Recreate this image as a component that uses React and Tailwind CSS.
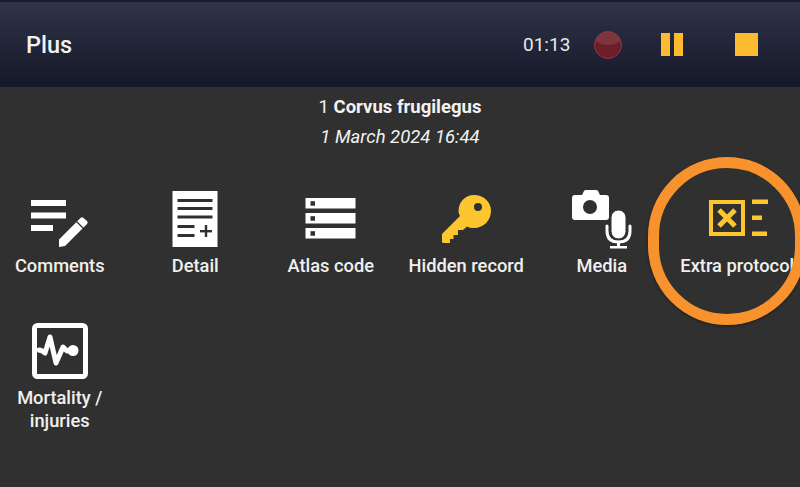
function CommentsIcon() {
  return (
    <svg width="60" height="50" viewBox="0 0 60 50" fill="white">
      <rect x="1" y="0" width="35" height="6" />
      <rect x="1" y="12.5" width="35" height="6" />
      <rect x="1" y="25" width="22" height="6" />
      <path d="M29 39.5 L50.5 18 Q52 16.5 53.5 18 L57 21 Q58.5 22.5 57 24 L35 46 L29 47 Z" />
      <path d="M46.500 21.500 L54 29" stroke="#303030" strokeWidth="1.200" fill="none" />
    </svg>
  );
}

function DetailIcon() {
  return (
    <svg width="46" height="56" viewBox="0 0 46 56">
      <rect x="0.5" y="0" width="45" height="56" fill="white" />
      <g fill="#303030">
        <rect x="5.5" y="8" width="35" height="3" />
        <rect x="5.5" y="16" width="35" height="3" />
        <rect x="5.5" y="24.500" width="35" height="3" />
        <rect x="5.5" y="34" width="17" height="3" />
        <rect x="5.5" y="43" width="17" height="3" />
        <rect x="28" y="39" width="12" height="2.400" />
        <rect x="32.800" y="34" width="2.400" height="12" />
      </g>
    </svg>
  );
}

function AtlasIcon() {
  return (
    <svg width="51" height="41" viewBox="0 0 51 41">
      {[0, 15, 30].map((y) => (
        <g key={y}>
          <rect x="0.5" y={y} width="50" height="10.500" fill="white" />
          <rect x="5.500" y={y + 3.200} width="4.500" height="4.500" fill="#303030" />
        </g>
      ))}
    </svg>
  );
}

function KeyIcon() {
  return (
    <svg width="50" height="49" viewBox="0 0 50 49">
      <path
        fill="#fdc52f"
        fillRule="evenodd"
        d="M32 0 C42 0 49 7 49 16 C49 25 42 33 32 33 C29 33 27 32.500 25 31.500 L21 35 L16 35 L16 40 L11.500 40 L11.500 44 L8 44 L8 48 L1 48 L0 47 L0 39 L18 21 C17 19 16.500 17.500 16.500 16 C16.500 7 23 0 32 0 Z M36 8 A4 4 0 1 0 36 16 A4 4 0 1 0 36 8 Z"
      />
    </svg>
  );
}

function MediaIcon() {
  return (
    <svg width="60" height="60" viewBox="0 0 60 60" fill="white">
      <path
        fillRule="evenodd"
        d="M3 6 H10 L12 2 Q12.500 1 14 1 H24 Q25.500 1 26 2 L28 6 H34 Q37 6 37 9 V28 Q37 31 34 31 H3 Q0 31 0 28 V9 Q0 6 3 6 Z M18 11 A7 7 0 1 0 18 25 A7 7 0 1 0 18 11 Z"
      />
      <rect x="39" y="21" width="15" height="29" rx="7.500" stroke="#303030" strokeWidth="1" />
      <path
        d="M35 37 V42 Q35 53 46.500 53 Q58 53 58 42 V37"
        fill="none"
        stroke="white"
        strokeWidth="3"
        strokeLinecap="round"
      />
      <rect x="45" y="53" width="3" height="5" />
      <rect x="38" y="57" width="17" height="2.500" />
    </svg>
  );
}

function ExtraIcon() {
  return (
    <svg width="60" height="38" viewBox="0 0 60 38" fill="#fdc52f">
      <path fillRule="evenodd" d="M0 1 H36 V37 H0 Z M4 5 V33 H32 V5 Z" />
      <path d="M10 11 L26 27 M26 11 L10 27" stroke="#fdc52f" strokeWidth="5" fill="none" />
      <rect x="43" y="0.500" width="16" height="4.500" />
      <rect x="43" y="16.500" width="10" height="4.500" />
      <rect x="43" y="32.500" width="15" height="4.500" />
    </svg>
  );
}

function MortalityIcon() {
  return (
    <svg width="56" height="56" viewBox="0 0 56 56">
      <rect x="2.500" y="2.500" width="51" height="51" rx="3" fill="none" stroke="white" strokeWidth="5" />
      <path
        d="M5 28 Q8 26 10 28 L13 30 L18 14 L24 40 L31 24 L35 28 L40 28"
        fill="none"
        stroke="white"
        strokeWidth="5"
        strokeLinejoin="round"
      />
      <circle cx="41" cy="27.500" r="5.500" fill="white" />
    </svg>
  );
}

const actions = [
  { label: 'Comments', icon: <CommentsIcon />, shift: 'translate-y-[6px]' },
  { label: 'Detail', icon: <DetailIcon />, shift: '' },
  { label: 'Atlas code', icon: <AtlasIcon />, shift: '-translate-y-px' },
  { label: 'Hidden record', icon: <KeyIcon />, shift: 'translate-x-px' },
  { label: 'Media', icon: <MediaIcon />, shift: '' },
  { label: 'Extra protocol', icon: <ExtraIcon />, shift: 'translate-x-[2px] -translate-y-px' },
  { label: 'Mortality / injuries', icon: <MortalityIcon />, shift: '' },
];

export default function App() {
  return (
    <div className="relative w-[800px] h-[487px] overflow-hidden bg-[#303030] text-white font-['Roboto',sans-serif]">
      <header className="h-[87px] border-t-2 border-[#191b33] bg-gradient-to-b from-[#2f3448] to-[#151828] flex items-center pl-[26px]">
        <h1 className="text-[23.500px] font-medium text-[#f2f2f2] flex-1 pt-[2px]">Plus</h1>
        <span className="text-[19px] text-[#e8e8ea] w-[71px] pt-[2px]">01:13</span>
        <div className="relative w-[28px] h-[28px] rounded-full bg-[#6e1e28] border border-[#8a3a42] overflow-hidden">
          <div className="absolute top-0 inset-x-0 h-[13px] bg-white/10 rounded-b-[50%]" />
        </div>
        <div className="ml-[39px] flex gap-[4px]">
          <div className="w-[9px] h-[23px] bg-[#fdbb30]" />
          <div className="w-[9px] h-[23px] bg-[#fdbb30]" />
        </div>
        <div className="ml-[52px] mr-[42px] w-[23px] h-[23px] bg-[#fdbb30]" />
      </header>

      <section className="mt-[9px] text-center text-[18.500px] text-[#f2f2f2]">
        <p className="leading-[22px]">
          1 <span className="font-bold">Corvus frugilegus</span>
        </p>
        <p className="mt-[8px] leading-[22px] italic">1 March 2024 16:44</p>
      </section>

      <div className="mt-[41px] -ml-2 w-[813px] grid grid-cols-6">
        {actions.map((a) => (
          <div key={a.label} className="flex flex-col items-center h-[132px]">
            <div className={`h-[60px] flex items-center justify-center ${a.shift}`}>{a.icon}</div>
            <span className="mt-[5px] px-2 text-[18.300px] leading-[23px] font-medium text-center text-[#f0f0f0]">
              {a.label}
            </span>
          </div>
        ))}
      </div>

      <div className="absolute left-[648px] top-[157px] w-[158px] h-[168px] rounded-full border-[11px] border-[#f7922c] shadow-[0_1px_3px_rgba(0,0,0,0.4)]" />
    </div>
  );
}
